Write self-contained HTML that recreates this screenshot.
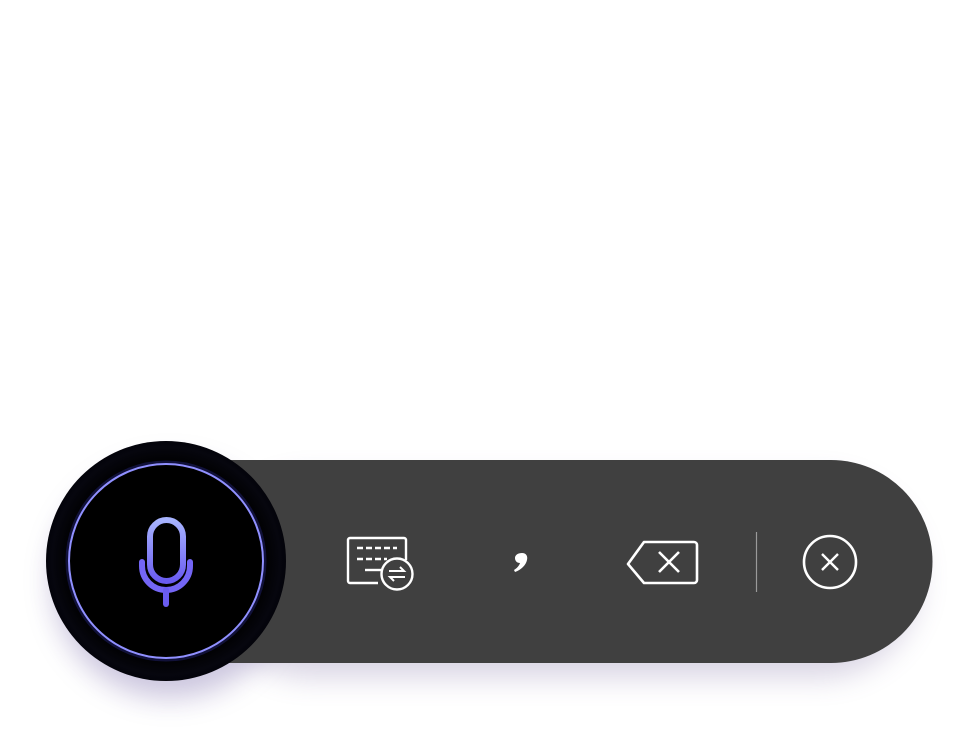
<!DOCTYPE html>
<html><head><style>
html,body{margin:0;padding:0;background:#fff;width:976px;height:732px;overflow:hidden}
</style></head><body>
<svg width="976" height="732" viewBox="0 0 976 732" style="position:absolute;left:0;top:0">
<defs>
<filter id="sh" x="-30%" y="-30%" width="160%" height="180%"><feGaussianBlur stdDeviation="14"/></filter>
<linearGradient id="mg" x1="0" y1="0" x2="0" y2="1"><stop offset="0" stop-color="#a8b4ff"/><stop offset="1" stop-color="#6a5cf0"/></linearGradient>
<radialGradient id="rg"><stop offset="0.8" stop-color="#000"/><stop offset="0.95" stop-color="#06060e"/><stop offset="1" stop-color="#03030a"/></radialGradient>
</defs>
<rect x="210" y="478" width="710" height="200" rx="100" fill="#7a6aa0" opacity="0.28" filter="url(#sh)"/>
<circle cx="170" cy="580" r="118" fill="#6a5aa0" opacity="0.35" filter="url(#sh)"/>
<path d="M200 460 H831 A101.5 101.5 0 0 1 831 663 H200 Z" fill="#404040"/>
<circle cx="166" cy="561" r="120" fill="url(#rg)"/>
<circle cx="166" cy="561" r="99" fill="none" stroke="#3030a0" stroke-width="3" opacity="0.35"/>
<circle cx="166" cy="561" r="97" fill="none" stroke="#9090ff" stroke-width="2"/>
<rect x="150" y="520" width="33" height="61" rx="16.5" fill="none" stroke="url(#mg)" stroke-width="6"/>
<path d="M142 562 v4 a24 24 0 0 0 48 0 v-4" fill="none" stroke="#7466f5" stroke-width="6" stroke-linecap="round"/>
<line x1="166" y1="590" x2="166" y2="604" stroke="#6a5cf0" stroke-width="6" stroke-linecap="round"/>
<g stroke="#fff" fill="none" stroke-width="2.4">
<path d="M378 583 H350 a2 2 0 0 1 -2 -2 V540 a2 2 0 0 1 2 -2 H404 a2 2 0 0 1 2 2 V560"/>
<path d="M357 548 h40" stroke-dasharray="6 3"/>
<path d="M357 559 h30" stroke-dasharray="6 3"/>
<path d="M365 570 h16"/>
<circle cx="397" cy="574" r="15.5" fill="#404040"/>
<path d="M389 571 h15 l-4 -4 M405 577 h-15 l4 4" stroke-width="2"/>
<path d="M644 542 H694 a3 3 0 0 1 3 3 V580 a3 3 0 0 1 -3 3 H644 L628 564 Z" stroke-width="2.6" stroke-linejoin="round"/>
<path d="M659 552 l20 20 M679 552 l-20 20" stroke-width="2.6"/>
<circle cx="830" cy="562" r="26" stroke-width="2.6"/>
<path d="M822 554 l16 16 M838 554 l-16 16" stroke-width="2.4"/>
</g>
<line x1="756.5" y1="532" x2="756.5" y2="592" stroke="#9a9a9a" stroke-width="1.2"/>
<path d="M522 553 c4 0 6 3 5 7 c-1 5 -6 10 -12 12 l-1 -2 c3 -2 5 -4 6 -7 c-3 0 -5 -2 -5 -5 c0 -3 3 -5 7 -5 z" fill="#fff"/>
</svg>
</body></html>
